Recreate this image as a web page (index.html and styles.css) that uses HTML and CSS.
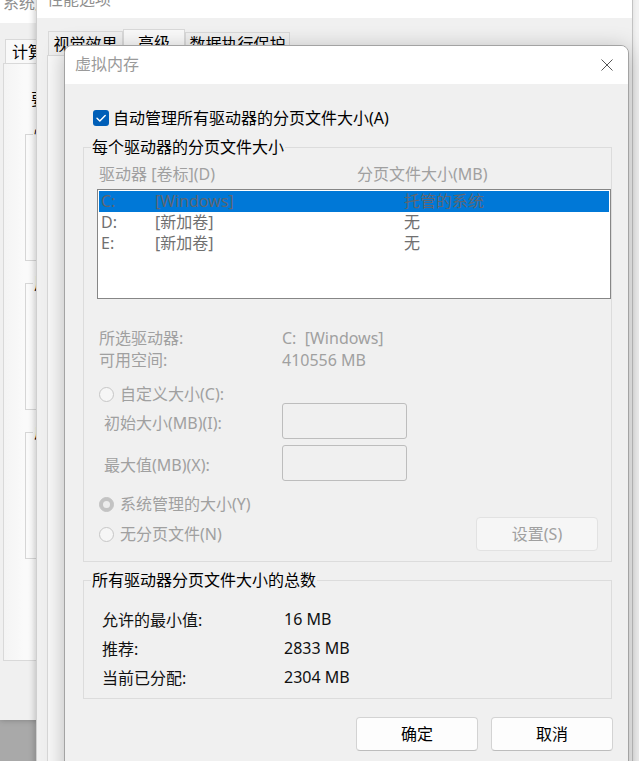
FILE: index.html
```html
<!DOCTYPE html>
<html lang="zh-CN">
<head>
<meta charset="utf-8">
<title>虚拟内存</title>
<link rel="stylesheet" href="styles.css">
</head>
<body>
<div class="desk">
  <div class="win win-back"></div>

  <div class="win win-sys">
    <div class="titlebar sys-title"><span class="wtitle">系统属性</span></div>
    <div class="sys-body">
      <div class="tabs sys-tabs"><span class="tab tab-on sys-tab">计算机名</span></div>
      <div class="tabpanel sys-panel">
        <div class="sys-note">要进行大多数更改，你必须作为管理员登录。</div>
        <fieldset class="sys-grp"><legend>性能</legend></fieldset>
        <fieldset class="sys-grp"><legend>用户配置文件</legend></fieldset>
        <fieldset class="sys-grp"><legend>启动和故障恢复</legend></fieldset>
      </div>
    </div>
  </div>

  <div class="win win-perf">
    <div class="titlebar perf-title">
      <span class="wtitle">性能选项</span>
      <svg class="xicon" width="12" height="12" viewBox="0 0 12 12"><path d="M0.5 0.5L11.5 11.5M11.5 0.5L0.5 11.5" stroke="#5a5a5a" stroke-width="1" fill="none"/></svg>
    </div>
    <div class="tabs perf-tabs">
      <span class="tab tab-v">视觉效果</span>
      <span class="tab tab-on tab-a">高级</span>
      <span class="tab tab-d">数据执行保护</span>
    </div>
    <div class="tabpanel perf-panel"></div>
  </div>

  <div class="dialog">
    <div class="titlebar dlg-title">
      <span class="dtitle">虚拟内存</span>
      <svg class="xicon" width="12" height="12" viewBox="0 0 12 12"><path d="M0.5 0.5L11.5 11.5M11.5 0.5L0.5 11.5" stroke="#555" stroke-width="1" fill="none"/></svg>
    </div>
    <div class="dlg-body">
      <label class="check-row">
        <span class="checkbox"><svg width="16" height="16" viewBox="0 0 16 16"><path d="M4 8.2L6.8 11L12.2 5.4" stroke="#fff" stroke-width="1.4" fill="none" stroke-linecap="round" stroke-linejoin="round"/></svg></span>
        <span>自动管理所有驱动器的分页文件大小(A)</span>
      </label>

      <fieldset class="grp grp1">
        <legend>每个驱动器的分页文件大小</legend>
        <div class="list-head dis">
          <span>驱动器 [卷标](D)</span>
          <span>分页文件大小(MB)</span>
        </div>
        <div class="list">
          <div class="row sel"><span>C:</span><span>[Windows]</span><span>托管的系统</span></div>
          <div class="row"><span>D:</span><span>[新加卷]</span><span>无</span></div>
          <div class="row"><span>E:</span><span>[新加卷]</span><span>无</span></div>
        </div>
        <div class="info dis">
          <span>所选驱动器:</span><span>C:&nbsp;&nbsp;[Windows]</span>
          <span>可用空间:</span><span>410556 MB</span>
        </div>
        <div class="radio-row r-custom dis"><span class="radio"></span><span>自定义大小(C):</span></div>
        <div class="size-row s1 dis"><span class="size-label">初始大小(MB)(I):</span><span class="input"></span></div>
        <div class="size-row s2 dis"><span class="size-label">最大值(MB)(X):</span><span class="input"></span></div>
        <div class="radio-row r-sys dis"><span class="radio on"></span><span>系统管理的大小(Y)</span></div>
        <div class="last-row">
          <div class="radio-row dis"><span class="radio"></span><span>无分页文件(N)</span></div>
          <span class="btn btn-dis">设置(S)</span>
        </div>
      </fieldset>

      <fieldset class="grp grp2">
        <legend>所有驱动器分页文件大小的总数</legend>
        <div class="totals">
          <span>允许的最小值:</span><span>16 MB</span>
          <span>推荐:</span><span>2833 MB</span>
          <span>当前已分配:</span><span>2304 MB</span>
        </div>
      </fieldset>

      <div class="buttons">
        <span class="btn">确定</span>
        <span class="btn">取消</span>
      </div>
    </div>
  </div>
</div>
</body>
</html>
```

FILE: styles.css
```css
* { box-sizing: border-box; }
html, body { margin: 0; padding: 0; }
body {
  width: 639px;
  height: 761px;
  overflow: hidden;
  background: #a9a9a9;
  font-family: "Noto Sans", "Noto Sans CJK SC", sans-serif;
  font-size: 16px;
  color: #000;
}
.desk { position: relative; width: 639px; height: 761px; overflow: hidden; }

.win { position: absolute; background: #f0f0f0; overflow: hidden; }
.titlebar { background: #fff; display: flex; align-items: flex-start; justify-content: space-between; }
.wtitle { color: #8f8f8f; line-height: 18px; white-space: nowrap; }
.tabs { display: flex; align-items: flex-end; }
.tab {
  display: flex; align-items: center; justify-content: center;
  border: 1px solid #d9d9d9; border-bottom: none;
  background: #f0f0f0; white-space: nowrap; line-height: 20px;
}
.tab-on { background: #f9f9f9; }
.tabpanel { background: #f9f9f9; border: 1px solid #d9d9d9; }

/* background window at far right */
.win-back { z-index: 0; left: 620px; top: 0; width: 19px; height: 761px; background: #f2f2f2; border-left: 1px solid #cfcfcf; }

/* System properties window */
.win-sys { z-index: 1; left: 0; top: -10px; width: 420px; height: 730px; box-shadow: 0 0 6px rgba(0,0,0,.25); }
.sys-title { height: 33px; padding: 4px 0 0 3px; }
.sys-body { display: flex; flex-direction: column; }
.sys-tabs { margin: 15px 0 0 5px; height: 25px; }
.sys-tab { height: 25px; padding: 0 6px; justify-content: flex-start; margin-bottom: -1px; border-bottom: 1px solid #f9f9f9; }
.sys-panel { margin-left: 3px; height: 598px; padding: 25px 0 0 27px; background: linear-gradient(90deg, #f4f4f4, #fafafa 20px, #f6f6f6); }
.sys-note { line-height: 20px; white-space: nowrap; }
.sys-grp { margin: 15px 0 0 -6px; padding: 0; height: 137px; border: 1px solid #d6d6d6; min-width: 0; }
.sys-grp + .sys-grp { margin-top: 12px; }
.sys-grp legend { margin-left: 7px; padding: 0 1px; line-height: 20px; }

/* Performance options window */
.win-perf { z-index: 2; left: 36px; top: -10px; width: 597px; height: 800px; border-left: 1px solid #cfcfcf; border-right: 1px solid #c2c2c2; box-shadow: -2px 0 6px rgba(0,0,0,.18); }
.perf-title { height: 28px; padding: 0 17px 0 10px; }
.perf-title .xicon { margin-top: -3px; }
.perf-tabs { margin: 11px 0 0 11px; height: 26px; }
.tab-v { width: 75px; height: 24px; }
.tab-a { width: 62px; height: 26px; }
.tab-d { width: 105px; height: 23px; }
.perf-panel { margin-left: 10px; margin-right: 8px; height: 760px; }

/* Virtual memory dialog */
.dialog {
  position: absolute; z-index: 3; left: 64px; top: 45px; width: 565px; height: 740px;
  background: #f0f0f0;
  border: 1px solid #a3a3a3;
  border-radius: 8px 8px 0 0;
  box-shadow: 0 4px 22px rgba(0,0,0,.26);
  overflow: hidden;
}
.dlg-title { height: 38px; align-items: center; padding: 0 15px 2px 10px; }
.dtitle { color: #9a9a9a; line-height: 20px; }
.dlg-title .xicon { margin-top: 2px; }

.dlg-body { padding: 24px 16px 0 18px; }
.dis { color: #a0a0a0; }

.check-row { display: flex; align-items: center; height: 20px; line-height: 20px; padding-left: 10px; gap: 4px; white-space: nowrap; }
.checkbox { width: 16px; height: 16px; border-radius: 3px; background: #005fb8; display: flex; }

.grp { margin: 9px 0 0; padding: 0; border: 1px solid #dcdcdc; min-width: 0; }
.grp legend { margin-left: 7px; padding: 0 1px; line-height: 20px; white-space: nowrap; }

.list-head { display: grid; grid-template-columns: 258px 1fr; margin-top: 7px; padding-left: 15px; line-height: 20px; white-space: nowrap; }
.list { margin: 5px 0 0 13px; height: 110px; border: 1px solid #868686; background: #fff; padding: 1px; }
.row { display: grid; grid-template-columns: 54px 249px 1fr; height: 21px; line-height: 21px; padding-left: 2px; color: #707070; white-space: nowrap; }
.row.sel { background: #0078d7; color: #5f6670; }

.info { display: grid; grid-template-columns: 183px 1fr; margin-top: 28px; padding-left: 15px; line-height: 22px; white-space: nowrap; }

.radio-row { display: flex; align-items: center; gap: 6px; height: 20px; line-height: 20px; padding-left: 15px; white-space: nowrap; }
.radio { width: 15px; height: 15px; border-radius: 50%; border: 1px solid #c6c6c6; background: #f6f6f6; display: flex; align-items: center; justify-content: center; }
.radio.on { background: #c3c3c3; border-color: #c3c3c3; }
.radio.on::after { content: ""; width: 7px; height: 7px; border-radius: 50%; background: #ececec; }
.r-custom { margin-top: 13px; }

.size-row { display: grid; grid-template-columns: 178px 125px; align-items: center; padding-left: 20px; white-space: nowrap; }
.size-label { line-height: 20px; padding-top: 4px; }
.s1 { margin-top: -1px; }
.s2 { margin-top: 6px; }
.input { height: 36px; border: 1px solid #bdbdbd; border-radius: 3px; background: #f0f0f0; }
.r-sys { margin-top: 13px; }

.last-row { display: flex; align-items: center; justify-content: space-between; margin-top: 3px; padding-right: 13px; padding-bottom: 10px; }

.btn {
  width: 122px; height: 34px;
  display: flex; align-items: center; justify-content: center;
  border: 1px solid #d3d3d3; border-bottom-color: #bdbdbd;
  border-radius: 4px; background: #fdfdfd; line-height: 20px;
}
.btn-dis { background: #f6f6f6; border-color: #e2e2e2; color: #a0a0a0; }

.grp2 { margin-top: 8px; }
.totals { display: grid; grid-template-columns: 182px 1fr; grid-auto-rows: 29px; align-items: center; margin-top: 14px; padding: 0 0 7px 18px; white-space: nowrap; color: #111; }

.buttons { display: flex; justify-content: flex-end; gap: 13px; margin: 18px -1px 0 0; }
```
